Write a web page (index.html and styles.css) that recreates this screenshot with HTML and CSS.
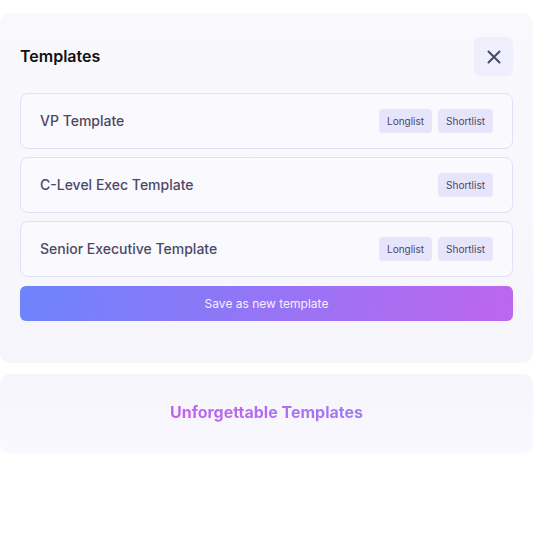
FILE: index.html
```html
<!DOCTYPE html>
<html lang="en">
<head>
  <meta charset="UTF-8">
  <meta name="viewport" content="width=device-width, initial-scale=1.0">
  <title>Templates</title>
  <link rel="stylesheet" href="styles.css">
</head>
<body>
  <div class="panel">
    <div class="header">
      <h2>Templates</h2>
      <button class="close" aria-label="Close">
        <svg width="14" height="14" viewBox="0 0 14 14"><path d="M1.5 1.5l11 11M12.5 1.5l-11 11" stroke="#4a4766" stroke-width="2" stroke-linecap="round"/></svg>
      </button>
    </div>
    <ul class="list">
      <li class="row">
        <span class="name">VP Template</span>
        <span class="tags"><span class="tag">Longlist</span><span class="tag">Shortlist</span></span>
      </li>
      <li class="row">
        <span class="name">C-Level Exec Template</span>
        <span class="tags"><span class="tag">Shortlist</span></span>
      </li>
      <li class="row">
        <span class="name">Senior Executive Template</span>
        <span class="tags"><span class="tag">Longlist</span><span class="tag">Shortlist</span></span>
      </li>
    </ul>
    <button class="save">Save as new template</button>
  </div>
  <div class="banner">
    <span class="brand">Unforgettable Templates</span>
  </div>
</body>
</html>
```

FILE: styles.css
```css
body {
  font-family: Inter, "Liberation Sans", sans-serif;
  margin: 0;
  padding-top: 13px;
  width: 533px;
  background: #fff;
}
.panel {
  background: linear-gradient(180deg, #f9f9fd, #f5f5fb);
  border-radius: 10px;
  padding: 24px 20px 42px;
}
.header {
  display: flex;
  justify-content: space-between;
  align-items: center;
}
.header h2 {
  margin: 0;
  font-size: 16px;
  font-weight: 600;
  color: #111;
  padding-bottom: 2px;
}
.close {
  width: 39px;
  height: 39px;
  border: none;
  border-radius: 6px;
  background: #efeefc;
  display: flex;
  align-items: center;
  justify-content: center;
  padding: 0;
}
.list {
  list-style: none;
  margin: 17px 0 9px;
  padding: 0;
  display: flex;
  flex-direction: column;
  gap: 8px;
}
.row {
  height: 54px;
  border: 1px solid #e2e0f8;
  border-radius: 8px;
  background: #faf9fe;
  display: flex;
  align-items: center;
  justify-content: space-between;
  padding: 0 19px;
}
.name {
  font-size: 14px;
  font-weight: 500;
  color: #4b4866;
  padding-bottom: 2px;
}
.tags {
  display: flex;
  gap: 6px;
}
.tag {
  background: #e6e5fb;
  color: #4b4866;
  font-size: 10px;
  height: 24px;
  line-height: 24px;
  padding: 0 8px;
  border-radius: 4px;
}
.save {
  display: block;
  width: 100%;
  height: 35px;
  border: none;
  border-radius: 6px;
  background: linear-gradient(100deg, #6d83fd, #be66ee);
  color: #f4f0ff;
  font-family: inherit;
  font-size: 12px;
  padding-bottom: 2px;
}
.banner {
  margin-top: 11px;
  height: 79px;
  border-radius: 10px;
  background: linear-gradient(180deg, #f5f5fb, #f9f8fe);
  display: flex;
  align-items: center;
  justify-content: center;
  padding-bottom: 3px;
  box-sizing: border-box;
}
.brand {
  font-size: 16px;
  font-weight: 700;
  background: linear-gradient(90deg, #c75eec, #9c7cf3);
  -webkit-background-clip: text;
  background-clip: text;
  color: transparent;
}
```
